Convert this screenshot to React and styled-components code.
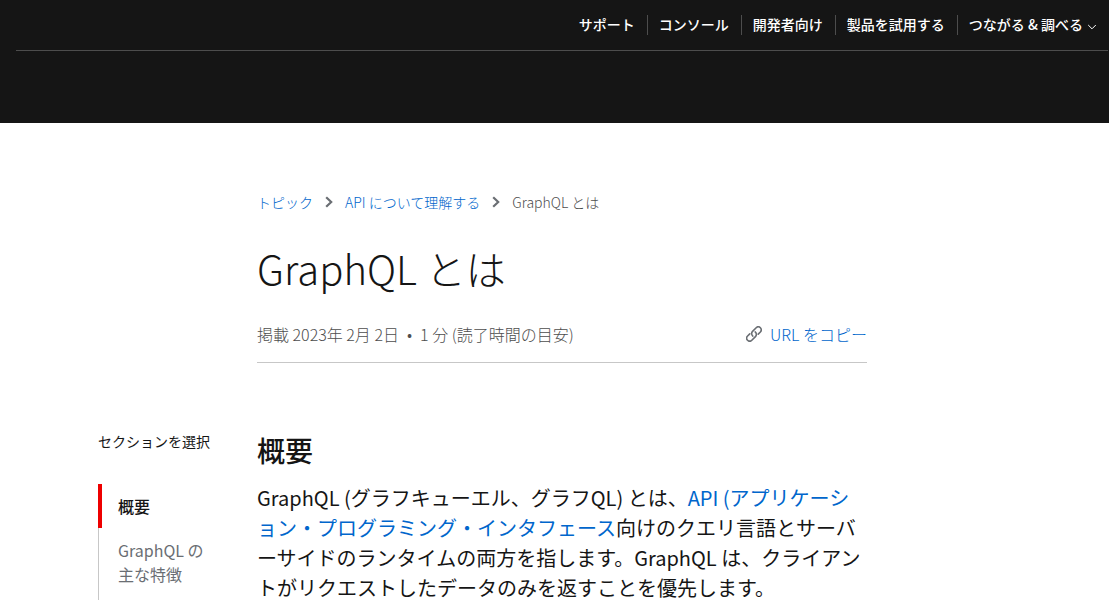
import React from "react";
import styled, { createGlobalStyle } from "styled-components";

const GlobalStyle = createGlobalStyle`
  *, *::before, *::after { box-sizing: border-box; }
  body {
    margin: 0;
    background: #fff;
    color: #151515;
    font-family: "Noto Sans CJK JP", "Noto Sans", sans-serif;
    font-size: 16px;
    line-height: 24px;
    overflow-x: hidden;
  }
  h1, h2, p, ul, ol { margin: 0; padding: 0; }
  ul, ol { list-style: none; }
  a { color: #0066cc; text-decoration: none; }
`;

const Header = styled.header`
  min-height: 123px;
  padding-left: 16px;
  background: #151515;
`;

const UtilityNav = styled.nav`
  display: flex;
  justify-content: flex-end;
  align-items: center;
  height: 51px;
  margin-right: 1px;
  border-bottom: 1px solid #4d4d4d;
`;

const UtilityList = styled.ul`
  display: flex;
`;

const UtilityItem = styled.li`
  padding: 0 12px 2px 11px;
  color: #fff;
  font-size: 14px;
  line-height: 18px;
  font-weight: 500;
  white-space: nowrap;

  & + & { border-left: 1px solid #4d4d4d; }
  &:last-child { padding-right: 11px; }
`;

const UtilityLink = styled.a`
  color: inherit;
`;

const MenuButton = styled.button`
  display: flex;
  align-items: center;
  gap: 4px;
  padding: 0;
  border: 0;
  background: none;
  color: inherit;
  font: inherit;
  cursor: pointer;

  svg { margin-top: 6px; }
`;

const Page = styled.div`
  display: grid;
  grid-template-columns: 127px minmax(0, 610px) 1fr;
  column-gap: 32px;
  max-width: 913px;
  margin: 0 auto;
  padding-top: 67px;
`;

const ArticleHeader = styled.header`
  grid-column: 2;
  padding-bottom: 16px;
  border-bottom: 1px solid #c7c7c7;
`;

const Breadcrumbs = styled.ol`
  display: flex;
  align-items: center;
  font-size: 14px;
  font-weight: 300;
`;

const Crumb = styled.li`
  display: flex;
  align-items: center;
  color: #4d4d4d;

  svg { margin: 0 12px; }
`;

const Title = styled.h1`
  margin-top: 28px;
  font-size: 40px;
  line-height: 52px;
  font-weight: 300;
`;

const Meta = styled.div`
  display: flex;
  justify-content: space-between;
  align-items: center;
  margin-top: 28px;
  color: #4d4d4d;
  font-weight: 300;
`;

const MetaItems = styled.div`
  display: flex;
  gap: 8px;
`;

const CopyButton = styled.button`
  display: flex;
  align-items: center;
  gap: 8px;
  padding: 0;
  border: 0;
  background: none;
  color: #0066cc;
  font: inherit;
  cursor: pointer;
`;

const Sidebar = styled.aside`
  grid-column: 1;
  margin-top: 66px;
`;

const SidebarTitle = styled.p`
  font-size: 14px;
  white-space: nowrap;
`;

const SectionList = styled.ul`
  margin-top: 31px;
`;

const SectionItem = styled.li`
  border-left: ${(p) => (p.$active ? "4px solid #ee0000" : "1px solid #c7c7c7")};

  &:last-child { padding-bottom: 16px; }
`;

const SectionLink = styled.a`
  display: block;
  padding: 10px 16px;
  padding-left: ${(p) => (p.$active ? "16px" : "19px")};
  color: ${(p) => (p.$active ? "#151515" : "#6a6e73")};
  font-weight: ${(p) => (p.$active ? 500 : 400)};
`;

const Article = styled.article`
  grid-column: 2;
  margin-top: 67px;
`;

const Heading = styled.h2`
  font-size: 28px;
  line-height: 40px;
  font-weight: 500;
`;

const Lead = styled.p`
  margin-top: 13px;
  font-size: 20px;
  line-height: 30px;
  word-break: break-all;
`;

const CrumbArrow = () => (
  <svg width="8" height="12" viewBox="0 0 8 12" aria-hidden="true">
    <path d="M1.2 1.2 6.2 6 1.2 10.8" fill="none" stroke="#6a6e73" strokeWidth="2.2" />
  </svg>
);

const ChevronDown = () => (
  <svg width="10" height="6" viewBox="0 0 10 6" aria-hidden="true">
    <path d="M1.2 1 5 4.8 8.8 1" fill="none" stroke="#fff" strokeWidth="1" />
  </svg>
);

const LinkIcon = () => (
  <svg
    width="16"
    height="16"
    viewBox="1 1 22 22"
    fill="none"
    stroke="#6a6e73"
    strokeWidth="2.2"
    strokeLinecap="round"
    strokeLinejoin="round"
    aria-hidden="true"
  >
    <path d="M10.4 14.8a4.3 4.3 0 0 1-.4-6.4l5-5a4.1 4.1 0 0 1 5.8 5.8l-3 3" />
    <path d="M13.6 9.2a4.3 4.3 0 0 1 .4 6.4l-5 5a4.1 4.1 0 0 1-5.8-5.8l3-3" />
  </svg>
);

export default function App() {
  return (
    <div lang="ja">
      <GlobalStyle />
      <Header>
        <UtilityNav>
          <UtilityList>
            {["サポート", "コンソール", "開発者向け", "製品を試用する"].map((label) => (
              <UtilityItem key={label}>
                <UtilityLink href="#">{label}</UtilityLink>
              </UtilityItem>
            ))}
            <UtilityItem>
              <MenuButton type="button">
                つながる &amp; 調べる
                <ChevronDown />
              </MenuButton>
            </UtilityItem>
          </UtilityList>
        </UtilityNav>
      </Header>
      <Page>
        <ArticleHeader>
          <Breadcrumbs>
            <Crumb>
              <a href="#topics">トピック</a>
              <CrumbArrow />
            </Crumb>
            <Crumb>
              <a href="#api">API について理解する</a>
              <CrumbArrow />
            </Crumb>
            <Crumb aria-current="page">GraphQL とは</Crumb>
          </Breadcrumbs>
          <Title>GraphQL とは</Title>
          <Meta>
            <MetaItems>
              <span>掲載 2023年 2月 2日</span>
              <span>•</span>
              <span>1 分 (読了時間の目安)</span>
            </MetaItems>
            <CopyButton type="button">
              <LinkIcon />
              URL をコピー
            </CopyButton>
          </Meta>
        </ArticleHeader>
        <Sidebar>
          <SidebarTitle>セクションを選択</SidebarTitle>
          <SectionList>
            <SectionItem $active>
              <SectionLink href="#overview" $active>概要</SectionLink>
            </SectionItem>
            <SectionItem>
              <SectionLink href="#features">GraphQL の主な特徴</SectionLink>
            </SectionItem>
          </SectionList>
        </Sidebar>
        <Article>
          <Heading id="overview">概要</Heading>
          <Lead>
            GraphQL (グラフキューエル、グラフQL) とは、
            <a href="#api">API (アプリケーション・プログラミング・インタフェース</a>
            向けのクエリ言語とサーバーサイドのランタイムの両方を指します。GraphQL は、クライアントがリクエストしたデータのみを返すことを優先します。
          </Lead>
        </Article>
      </Page>
    </div>
  );
}
